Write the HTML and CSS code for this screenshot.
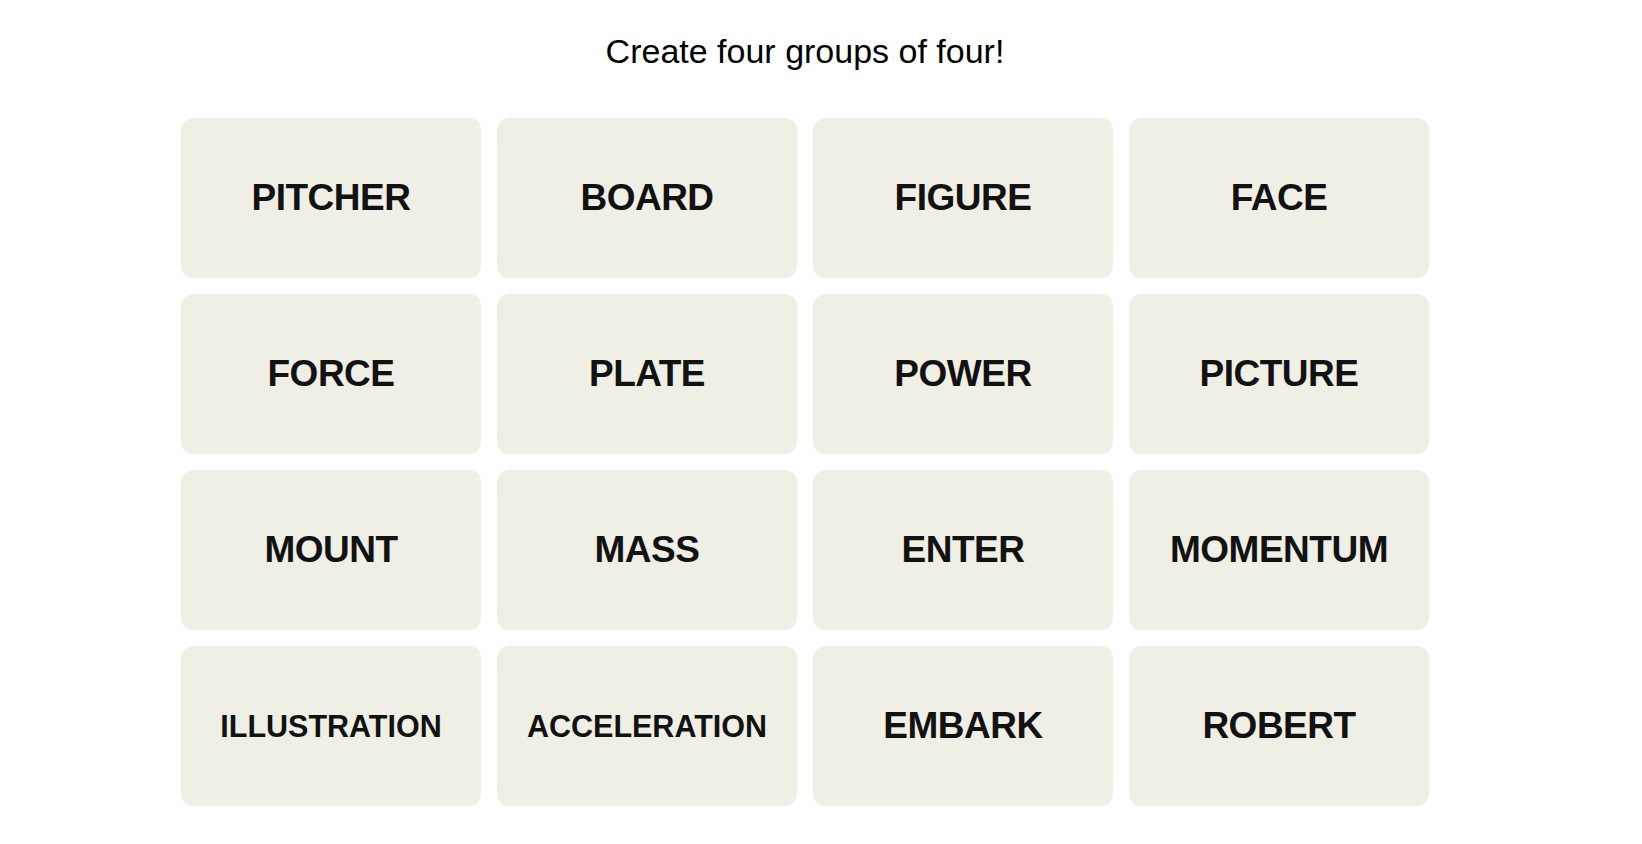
FILE: index.html
```html
<!DOCTYPE html>
<html lang="en">
<head>
<meta charset="utf-8">
<title>Connections</title>
<link rel="stylesheet" href="styles.css">
</head>
<body>
<main class="game">
  <h1 class="prompt">Create four groups of four!</h1>
  <section class="board">
    <button class="tile">PITCHER</button>
    <button class="tile">BOARD</button>
    <button class="tile">FIGURE</button>
    <button class="tile">FACE</button>
    <button class="tile">FORCE</button>
    <button class="tile">PLATE</button>
    <button class="tile">POWER</button>
    <button class="tile">PICTURE</button>
    <button class="tile">MOUNT</button>
    <button class="tile">MASS</button>
    <button class="tile">ENTER</button>
    <button class="tile">MOMENTUM</button>
    <button class="tile tile-long">ILLUSTRATION</button>
    <button class="tile tile-long">ACCELERATION</button>
    <button class="tile">EMBARK</button>
    <button class="tile">ROBERT</button>
  </section>
</main>
</body>
</html>
```
FILE: styles.css
```css
html, body {
  margin: 0;
  padding: 0;
  background: #ffffff;
}

.game {
  width: 1610px;
  display: flex;
  flex-direction: column;
  align-items: center;
  padding-top: 31px;
}

.prompt {
  margin: 0 0 47px 0;
  font-family: "Liberation Sans", Arial, sans-serif;
  font-weight: 400;
  font-size: 34px;
  line-height: 40px;
  color: #000000;
}

.board {
  display: grid;
  grid-template-columns: repeat(4, 300px);
  grid-auto-rows: 160px;
  gap: 16px;
}

.tile {
  display: flex;
  align-items: center;
  justify-content: center;
  border: none;
  border-radius: 12px;
  background: #efefe6;
  color: #121212;
  font-family: "Liberation Sans", Arial, sans-serif;
  font-weight: 700;
  font-size: 37px;
  letter-spacing: -0.5px;
  padding: 0;
  text-transform: uppercase;
}

.tile-long {
  font-size: 30.5px;
  letter-spacing: 0;
}
```
